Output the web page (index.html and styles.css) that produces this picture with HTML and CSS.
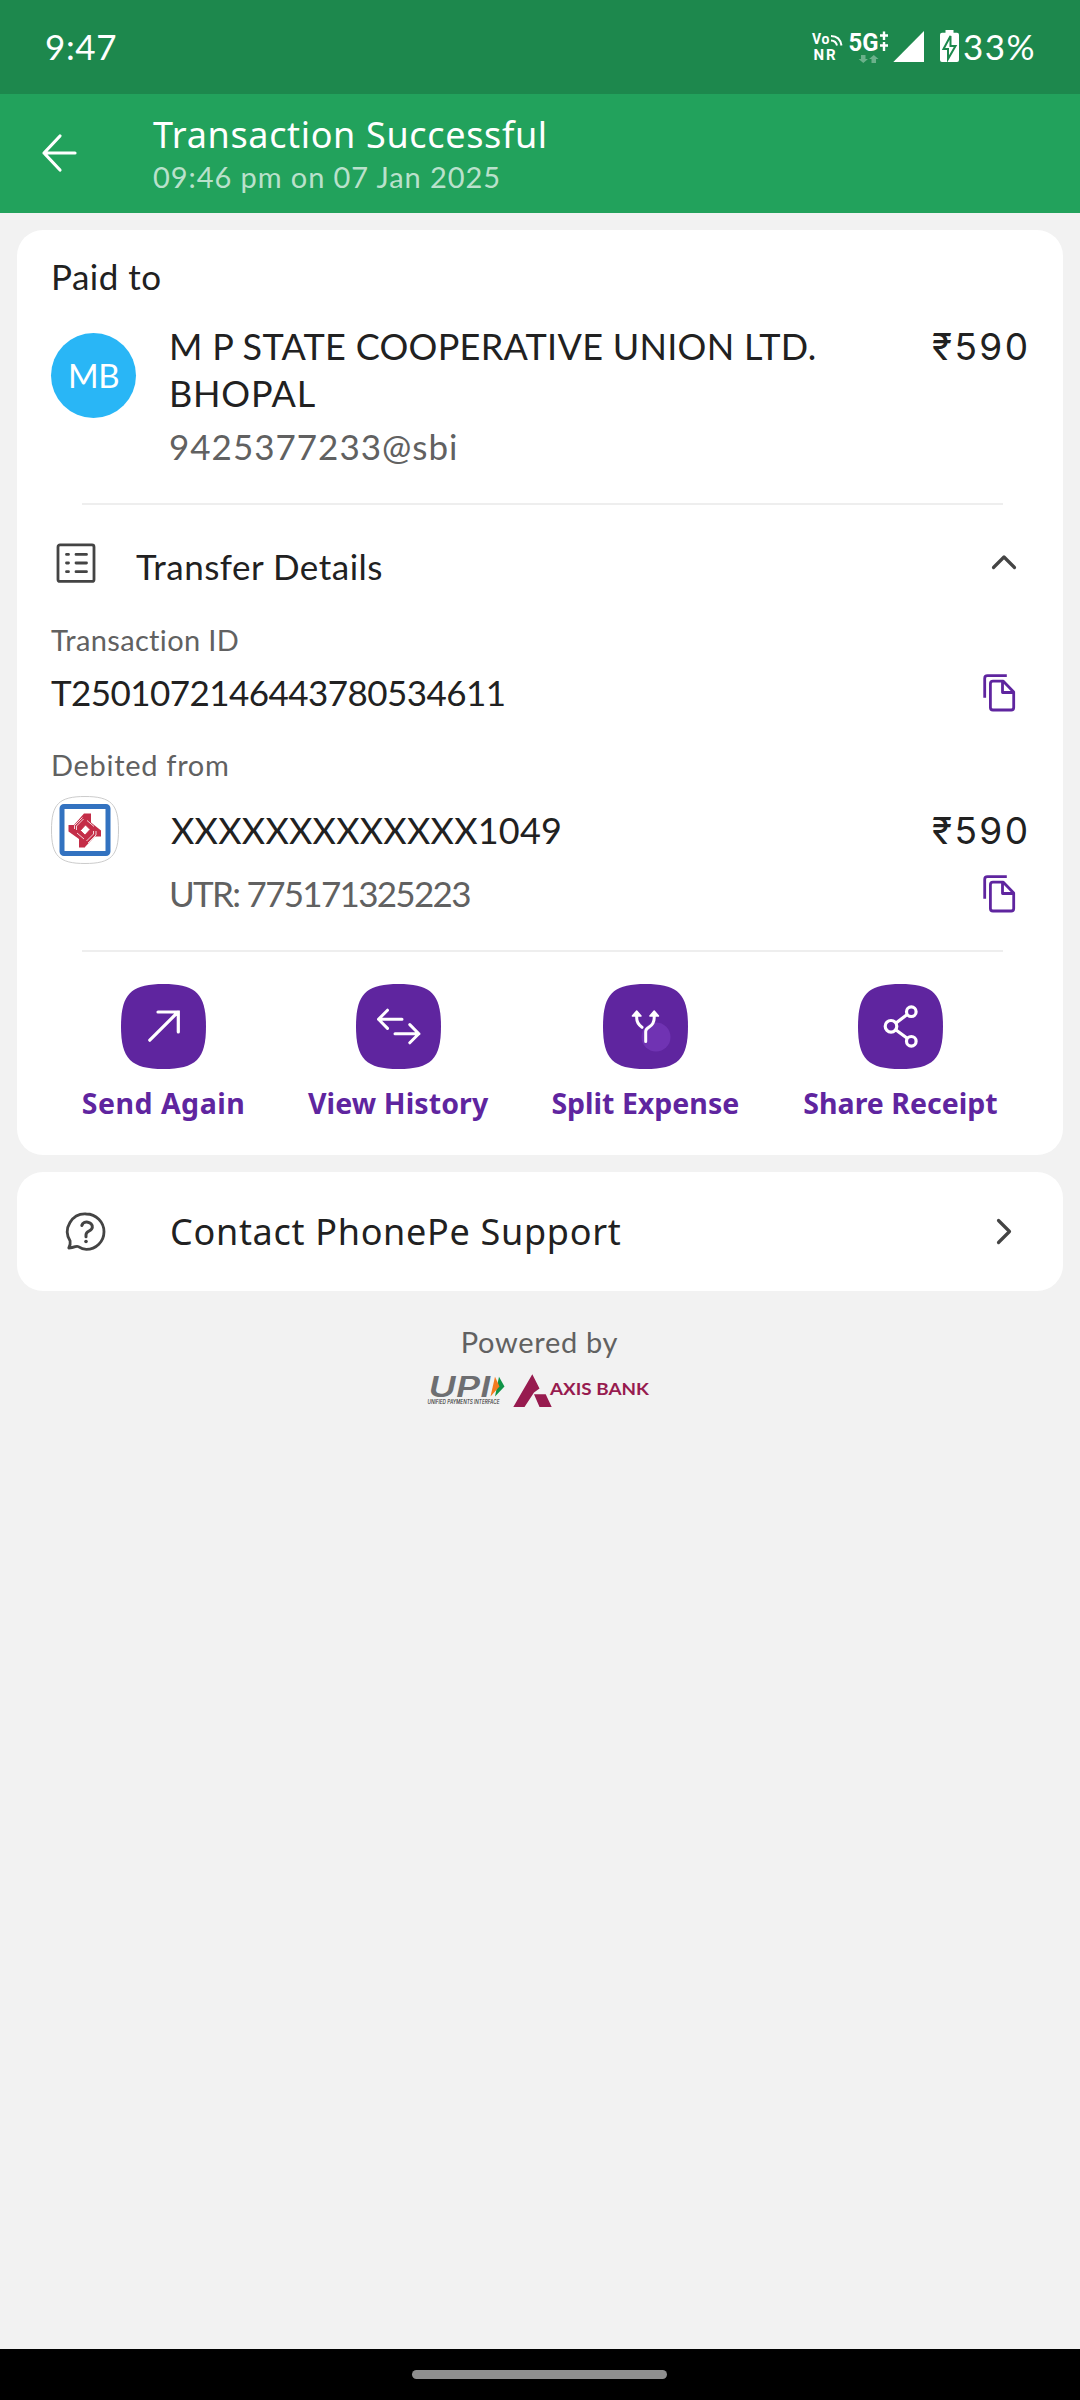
FILE: index.html
```html
<!DOCTYPE html>
<html lang="en">
<head>
<meta charset="utf-8">
<title>Transaction Successful</title>
<link rel="stylesheet" href="styles.css">
</head>
<body>
<div class="screen">
  <div class="status-bar">
    <span class="clock">9:47</span>
    <div class="status-right">
      <svg class="status-icons" width="147" height="36" viewBox="812 28 147 36">
        <g fill="#fff" font-family="Roboto, sans-serif" font-weight="700">
          <text x="812" y="43.7" font-size="14" textLength="17.5">Vo</text>
          <text x="813.5" y="60" font-size="15" textLength="22">NR</text>
          <text x="848.5" y="50.5" font-size="26.5" textLength="30" lengthAdjust="spacingAndGlyphs">5G</text>
        </g>
        <g fill="none" stroke="#fff" stroke-width="2">
          <path d="M831 36q9 0 10.500 9.500M831 40.500q5 .3 6 5"/>
          <path stroke-width="2.400" d="M880 35.500h8M884 31.500v8.500M880 45.500h8M884 42v9"/>
        </g>
        <path fill="#fff" opacity=".35" d="M861 55h4.500v4h2.500l-4.700 4-4.700-4h2.400zM871.500 63h4.500v-4h2.500l-4.700-4-4.700 4h2.400z"/>
        <path fill="#fff" d="M924 31v31h-30.700z"/>
        <path fill="#fff" d="M945.500 30h8v2.700h3.500q2 0 2 2V60q0 2-2 2h-15q-2 0-2-2V34.700q0-2 2-2h3.500z"/>
        <path fill="#fff" stroke="#1d884d" stroke-width="2" d="M950.500 36l-7 13h4.500v10l7.500-13h-5z"/>
      </svg>
      <span class="battery">33%</span>
    </div>
  </div>

  <header class="header">
    <svg class="back" width="38" height="40" viewBox="0 0 38 40" fill="none" stroke="#fff" stroke-width="3.200" stroke-linecap="round" stroke-linejoin="round"><path d="M34 20H3M19 3L3 20l16 17"/></svg>
    <div>
      <div class="title">Transaction Successful</div>
      <div class="subtitle">09:46 pm on 07 Jan 2025</div>
    </div>
  </header>

  <main class="content">
    <section class="card receipt">
      <div class="paid-to">Paid to</div>
      <div class="payee">
        <div class="avatar">MB</div>
        <div class="payee-info">
          <div class="payee-name">M P STATE COOPERATIVE UNION LTD.<br><span class="name-end">BHOPAL</span></div>
          <div class="vpa">9425377233@sbi</div>
        </div>
        <div class="amount">₹590</div>
      </div>
      <hr class="rule">
      <div class="details-head">
        <svg class="list-icon" width="40" height="40" viewBox="0 0 40 40" fill="none" stroke="#444" stroke-width="2.800" stroke-linecap="round"><rect x="2" y="1.900" width="36" height="36.500" rx="2"/><path d="M10.500 11.400h2M10.500 20h2M10.500 28.700h2M20 11.400h10.500M20 20h10.500M20 28.700h10.500"/></svg>
        <span class="details-title">Transfer Details</span>
        <svg class="chevron-up" width="26" height="16" viewBox="0 0 26 16" fill="none" stroke="#444" stroke-width="3.200" stroke-linecap="round" stroke-linejoin="round"><path d="M2.500 13.500L13 3l10.500 10.500"/></svg>
      </div>
      <div class="label label-id">Transaction ID</div>
      <div class="id-row">
        <span class="txn-id">T2501072146443780534611</span>
        <svg class="copy" width="33" height="38" viewBox="0 0 33 38" fill="none" stroke="#5f259f" stroke-width="2.800" stroke-linejoin="round"><path d="M23.800 1.700H4.500q-2.800 0-2.800 2.800v19.200"/><path d="M10 7.200h10.300l10.400 10.800v15.500q0 2.500-2.500 2.500H10q-2.600 0-2.600-2.500V9.700q0-2.500 2.600-2.500zM19.500 7.500V18.500h11"/></svg>
      </div>
      <div class="label label-from">Debited from</div>
      <div class="bank-row">
        <svg class="bank" width="68" height="68" viewBox="0 0 68 68">
          <path fill="#fff" stroke="#ccc" stroke-width="1" d="M34 .5C60 .5 67.500 8 67.500 34S60 67.500 34 67.500.5 60 .5 34 8 .5 34 .5z"/>
          <rect x="11" y="10.500" width="46" height="47" rx="2" fill="none" stroke="#3272c0" stroke-width="5"/>
          <path fill="#c42d48" d="M33 17.500h7v9l10 8v6h-6L34 51v.5h-6v-8.500L17.500 35.500V29H23z"/>
          <g fill="none" stroke="#fff" stroke-width=".8"><path d="M23.500 33v-3.500l8-8M25.500 34v-4l7-7M45 35v4l-8 8M42.500 35v3l-7 7M36 24.500l7 6M26 37l7 6"/></g>
          <path fill="#fff" stroke="#c42d48" stroke-width=".8" d="M34.500 29l4.500 4.500-5 5.500-4.500-4.500z"/>
        </svg>
        <span class="account">XXXXXXXXXXXXX1049</span>
        <span class="amount">₹590</span>
      </div>
      <div class="utr-row">
        <span class="utr">UTR: 775171325223</span>
        <svg class="copy" width="33" height="38" viewBox="0 0 33 38" fill="none" stroke="#5f259f" stroke-width="2.800" stroke-linejoin="round"><path d="M23.800 1.700H4.500q-2.800 0-2.800 2.800v19.200"/><path d="M10 7.200h10.300l10.400 10.800v15.500q0 2.500-2.500 2.500H10q-2.600 0-2.600-2.500V9.700q0-2.500 2.600-2.500zM19.500 7.500V18.500h11"/></svg>
      </div>
      <hr class="rule">
      <div class="actions">
        <div class="action a-send">
          <svg class="tile" viewBox="0 0 85 85"><path fill="#5f259f" d="M42.500 0C75 0 85 10 85 42.500S75 85 42.500 85 0 75 0 42.500 10 0 42.500 0z"/><path fill="none" stroke="#fff" stroke-width="3.200" stroke-linecap="round" stroke-linejoin="miter" d="M28.800 56.200L57 28M37 28h20.300v20"/></svg>
          <span>Send Again</span>
        </div>
        <div class="action a-history">
          <svg class="tile" viewBox="0 0 85 85"><path fill="#5f259f" d="M42.500 0C75 0 85 10 85 42.500S75 85 42.500 85 0 75 0 42.500 10 0 42.500 0z"/><path fill="none" stroke="#fff" stroke-width="3" stroke-linecap="round" stroke-linejoin="round" d="M46 35.300H22.500M31.500 26.200l-9 9.100 9 9.100M39 49.700h24M53.800 40.600l9 9.100-9 9.100"/></svg>
          <span>View History</span>
        </div>
        <div class="action a-split">
          <svg class="tile" viewBox="0 0 85 85"><path fill="#5f259f" d="M42.500 0C75 0 85 10 85 42.500S75 85 42.500 85 0 75 0 42.500 10 0 42.500 0z"/><circle cx="53" cy="53" r="14.500" fill="#7033b3"/><path fill="none" stroke="#fff" stroke-width="3" stroke-linecap="round" stroke-linejoin="round" d="M33.700 31v3q0 5.500 5.300 9.300M51.200 31v3c0 10-8.500 8.500-8.500 13.500v10"/><path fill="#fff" stroke="#fff" stroke-width="1.500" stroke-linejoin="round" d="M33.700 27l4.300 5h-8.600zM51.200 27l4.300 5h-8.600z"/></svg>
          <span>Split Expense</span>
        </div>
        <div class="action a-share">
          <svg class="tile" viewBox="0 0 85 85"><path fill="#5f259f" d="M42.500 0C75 0 85 10 85 42.500S75 85 42.500 85 0 75 0 42.500 10 0 42.500 0z"/><g fill="none" stroke="#fff" stroke-width="3.200"><circle cx="33" cy="42.300" r="5.800"/><circle cx="53.300" cy="27.700" r="4.800"/><circle cx="53.300" cy="57.300" r="4.800"/><path d="M38 39l11.200-8.500M38 46l11.200 8.300"/></g></svg>
          <span>Share Receipt</span>
        </div>
      </div>
    </section>

    <section class="card support">
      <svg class="help" width="40" height="40" viewBox="0 0 40 40" fill="none" stroke="#444" stroke-width="2.800" stroke-linecap="round" stroke-linejoin="round"><path d="M20.300 2a17.700 17.700 0 0 1 0 35.400c-3 0-5.500-1-8-2.700-2-1.300-2.500.8-9.500 1.300 1.500-3 1.800-4.500 1.300-7A17.700 17.700 0 0 1 20.300 2z"/><path stroke-width="3" d="M15.800 13.500c1.500-5.500 11-4 10.500 1.800-.3 4-6.300 3.400-6.300 7.400v2"/><circle cx="20" cy="29.500" r="1.800" fill="#444" stroke="none"/></svg>
      <span class="support-text">Contact PhonePe Support</span>
      <svg class="chevron-right" width="16" height="27" viewBox="0 0 16 27" fill="none" stroke="#444" stroke-width="3.200" stroke-linecap="round" stroke-linejoin="round"><path d="M2.500 2.500l11 11-11 11"/></svg>
    </section>

    <footer class="powered">
      <div class="powered-by">Powered by</div>
      <svg class="partners" width="226" height="36" viewBox="427 1373 226 36">
        <text x="428.500" y="1396.700" font-family="Inter, sans-serif" font-weight="600" font-style="italic" font-size="28" textLength="62" lengthAdjust="spacingAndGlyphs" fill="#6d6e71">UPI</text>
        <path fill="#0f9447" d="M499 1376.700l5.500 9.700-9.500 10z"/>
        <path fill="#f47b20" d="M495 1376.700l4.500 9.700-9 10z"/>
        <text x="427.500" y="1403.900" font-family="Inter, sans-serif" font-style="italic" font-weight="500" font-size="5.800" textLength="72" lengthAdjust="spacingAndGlyphs" fill="#333">UNIFIED PAYMENTS INTERFACE</text>
        <path fill="#971b4f" d="M532.300 1374.300l7.200 14.200-5.500 4-9.500 14.500h-11.200zM534 1394.300h11.700l6 12.700h-12.200z"/>
        <text x="550" y="1394.500" font-family="Lato, sans-serif" font-weight="700" font-size="16.800" textLength="99" lengthAdjust="spacingAndGlyphs" fill="#971b4f">AXIS BANK</text>
      </svg>
    </footer>
  </main>

  <div class="nav-bar"><div class="pill"></div></div>
</div>
</body>
</html>
```
FILE: styles.css
```css
* { box-sizing: border-box; }

body {
  margin: 0;
  font-family: Lato, "Open Sans", sans-serif;
  font-variant-ligatures: none;
  color: #212121;
}

svg { display: block; flex: none; overflow: visible; }

.screen {
  display: flex;
  flex-direction: column;
  width: 1080px;
  height: 2400px;
  background: #f2f2f2;
  white-space: nowrap;
}

.status-bar {
  display: flex;
  justify-content: space-between;
  height: 94px;
  padding: 22px 44px 0 45px;
  background: #1d884d;
  color: #fff;
  font-size: 35px;
  line-height: 48px;
}
.clock { letter-spacing: 0.6px; }
.status-right { display: flex; gap: 4px; }
.status-icons { margin-top: 6px; }
.battery { width: 73px; letter-spacing: 1.5px; }

.header {
  display: flex;
  align-items: flex-start;
  gap: 74px;
  height: 119px;
  padding: 17px 0 0 41px;
  background: #22a25c;
  color: #fff;
}
.back { margin-top: 22px; }
.title { font-family: "Noto Sans", sans-serif; font-size: 36px; line-height: 48px; letter-spacing: 0.65px; }
.subtitle { font-size: 29px; line-height: 36px; letter-spacing: 0.92px; color: rgba(255, 255, 255, 0.7); }

.content { flex: 1; padding: 17px 17px 0; }
.card { background: #fff; border-radius: 26px; }

.receipt { height: 925px; padding: 22px 34px 0; }
.paid-to { font-size: 35px; line-height: 48px; letter-spacing: 0.5px; }

.payee { display: flex; margin-top: 23px; }
.avatar {
  width: 85px;
  height: 85px;
  margin-top: 10px;
  border-radius: 50%;
  background: #29b6f6;
  color: #fff;
  font-size: 33px;
  line-height: 85px;
  letter-spacing: -0.6px;
  text-align: center;
}
.payee-info { flex: 1; padding-left: 33px; }
.payee-name { font-size: 36px; line-height: 47px; letter-spacing: 0.28px; }
.name-end { letter-spacing: 0.8px; }
.vpa { margin-top: 5px; font-size: 35px; line-height: 48px; letter-spacing: 1px; color: #616161; }
.amount { width: 97px; font-family: Inter, sans-serif; font-size: 37px; line-height: 48px; letter-spacing: 2.4px; }

.rule { height: 2px; margin: 33px 26px 0 31px; border: 0; background: #eee; }

.details-head { display: flex; align-items: flex-start; margin-top: 37px; height: 48px; }
.list-icon { margin: 1px 0 0 5px; }
.details-title { flex: 1; padding-left: 40px; font-size: 35px; line-height: 48px; letter-spacing: 0.5px; }
.chevron-up { margin: 12px 12px 0 0; }

.label { font-size: 29px; line-height: 36px; color: #616161; }
.label-id { margin-top: 32px; letter-spacing: 0.35px; }
.label-from { margin-top: 31px; letter-spacing: 0.7px; }
.id-row { display: flex; justify-content: space-between; align-items: center; margin-top: 10px; padding-right: 13px; }
.copy { margin-top: 2px; }
.txn-id { font-size: 35px; line-height: 48px; letter-spacing: -0.55px; }

.bank-row { display: flex; height: 68px; margin-top: 13px; }
.account { flex: 1; padding: 10px 0 0 52px; font-size: 36px; line-height: 48px; letter-spacing: 0.23px; }
.bank-row .amount { padding-top: 11px; }
.utr-row { display: flex; justify-content: space-between; margin-top: 5px; padding: 0 13px 0 118px; align-items: center; }
.utr { font-size: 35px; line-height: 48px; letter-spacing: -1.7px; color: #616161; }
.utr-row + .rule { margin-top: 33px; }

.actions { display: flex; justify-content: space-between; margin-top: 32px; padding: 0 30px; }
.action {
  display: flex;
  flex-direction: column;
  align-items: center;
  gap: 16px;
  color: #5f259f;
  font-family: "Noto Sans", sans-serif;
  font-size: 28.5px;
  font-weight: 700;
  line-height: 36px;
}
.tile { width: 85px; height: 85px; }
.a-send { width: 165px; letter-spacing: 0.5px; }
.a-history { width: 181px; letter-spacing: 0.1px; }
.a-split { width: 190px; }
.a-share { width: 197px; }

.support { display: flex; align-items: center; height: 119px; margin-top: 17px; padding: 0 51px 0 49px; }
.support-text { flex: 1; padding-left: 64px; font-family: "Noto Sans", sans-serif; font-size: 36px; line-height: 48px; letter-spacing: 0.7px; }

.powered { display: flex; flex-direction: column; align-items: center; padding-top: 33px; }
.powered-by { margin-right: 1px; font-size: 29px; line-height: 36px; letter-spacing: 0.7px; color: #616161; }
.partners { margin-top: 13px; }

.nav-bar { height: 51px; padding: 21px 0 0 412px; background: #000; }
.pill { width: 255px; height: 9px; border-radius: 5px; background: #8f8f8f; }
```
